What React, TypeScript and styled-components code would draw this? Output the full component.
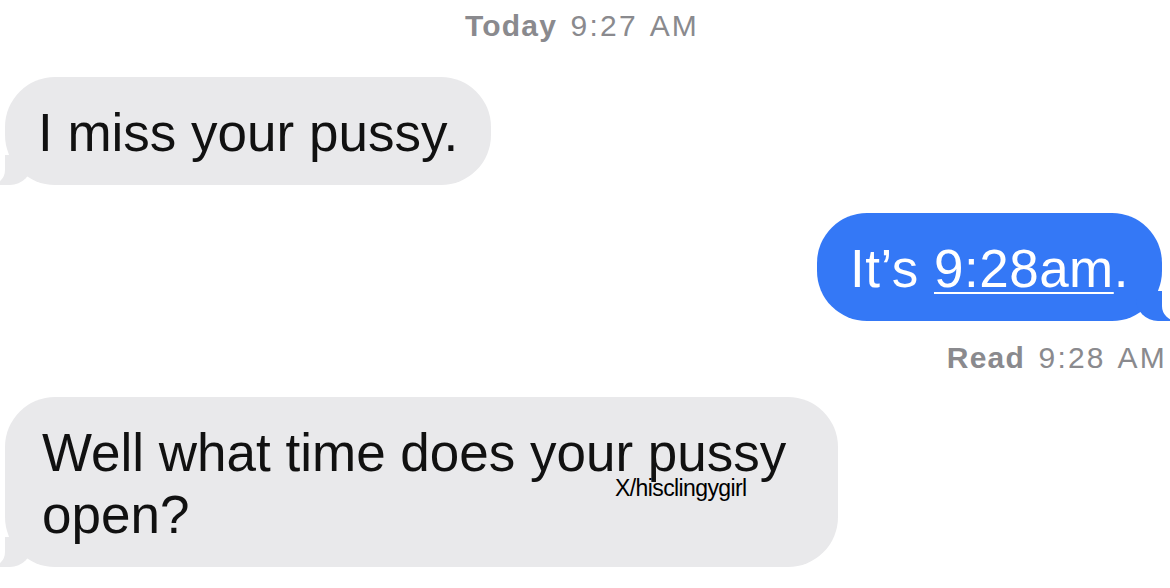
import React from "react";
import styled, { createGlobalStyle, css } from "styled-components";

const GlobalStyle = createGlobalStyle`
  html, body {
    margin: 0;
    padding: 0;
    background: #ffffff;
    overflow: hidden;
  }
  body {
    font-family: "Liberation Sans", Arial, Helvetica, sans-serif;
  }
`;

const GRAY = "#e9e9eb";
const BLUE = "#3478f6";

const Thread = styled.div`
  width: 1170px;
  height: 588px;
  display: flex;
  flex-direction: column;
  box-sizing: border-box;
  padding: 8px 8px 0 5px;
`;

const Stamp = styled.div<{ $align: "center" | "right"; $gap: number }>`
  margin-top: ${(p) => p.$gap}px;
  font-size: 30px;
  line-height: 36px;
  color: #8a8a8e;
  letter-spacing: 2.2px;
  word-spacing: 3px;
  text-align: ${(p) => p.$align};
  margin-right: ${(p) => (p.$align === "right" ? "-5px" : "0")};
  margin-left: ${(p) => (p.$align === "center" ? "-3px" : "0")};

  b {
    font-weight: 700;
    letter-spacing: 1.2px;
  }
`;

const Bubble = styled.div<{ $sent?: boolean; $gap: number; $width?: number }>`
  position: relative;
  margin-top: ${(p) => p.$gap}px;
  align-self: ${(p) => (p.$sent ? "flex-end" : "flex-start")};
  box-sizing: border-box;
  ${(p) => (p.$width ? `width: ${p.$width}px;` : "")}
  padding: 25px 33px 21px ${(p) => (p.$width ? 37 : 33)}px;
  border-radius: 50px;
  background: ${(p) => (p.$sent ? BLUE : GRAY)};
  color: ${(p) => (p.$sent ? "#ffffff" : "#111111")};
  font-size: 53px;
  line-height: 62px;
  letter-spacing: ${(p) => (p.$sent ? "0.5px" : "0")};

  &::before,
  &::after {
    content: "";
    position: absolute;
    bottom: 0;
    height: 30px;
  }

  ${(p) =>
    p.$sent
      ? css`
          &::before {
            right: -8px;
            width: 34px;
            background: ${BLUE};
            border-bottom-left-radius: 22px;
          }
          &::after {
            right: -24px;
            width: 24px;
            background: #ffffff;
            border-bottom-left-radius: 15px;
          }
        `
      : css`
          &::before {
            left: -5px;
            width: 32px;
            background: ${GRAY};
            border-bottom-right-radius: 22px;
          }
          &::after {
            left: -22px;
            width: 22px;
            background: #ffffff;
            border-bottom-right-radius: 15px;
          }
        `}
`;

const Link = styled.span`
  text-decoration: underline;
  text-decoration-thickness: 2px;
  text-underline-offset: 5px;
`;

const Watermark = styled.span`
  position: absolute;
  left: 610px;
  top: 80px;
  font-size: 23px;
  line-height: 23px;
  letter-spacing: -0.6px;
  color: #000000;
  white-space: nowrap;
  z-index: 2;
`;

export default function App() {
  return (
    <>
      <GlobalStyle />
      <Thread>
        <Stamp $align="center" $gap={0}>
          <b>Today</b> 9:27 AM
        </Stamp>
        <Bubble $gap={33}>I miss your pussy.</Bubble>
        <Bubble $sent $gap={28}>
          It’s <Link>9:28am</Link>.
        </Bubble>
        <Stamp $align="right" $gap={19}>
          <b>Read</b> 9:28 AM
        </Stamp>
        <Bubble $gap={21} $width={833}>
          Well what time does your pussy open?
          <Watermark>X/hisclingygirl</Watermark>
        </Bubble>
      </Thread>
    </>
  );
}
